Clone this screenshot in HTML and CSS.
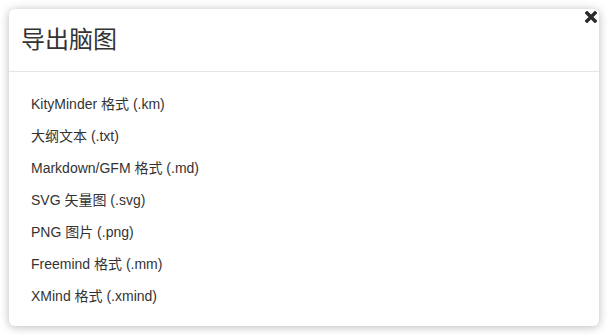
FILE: index.html
```html
<!DOCTYPE html>
<html lang="zh">
<head>
<meta charset="utf-8">
<title>导出脑图</title>
<link rel="stylesheet" href="styles.css">
</head>
<body>
<div class="modal">
  <div class="close" role="button" aria-label="关闭">
    <svg class="close-icon" width="12" height="12" viewBox="0 0 12 12"><path d="M2 2 L10 10 M10 2 L2 10" stroke="#2b2b2b" stroke-width="3.4" stroke-linecap="square"/></svg>
  </div>
  <div class="modal-header">
    <h4 class="modal-title">导出脑图</h4>
  </div>
  <ul class="modal-body">
    <li>KityMinder 格式 (.km)</li>
    <li>大纲文本 (.txt)</li>
    <li>Markdown/GFM 格式 (.md)</li>
    <li>SVG 矢量图 (.svg)</li>
    <li>PNG 图片 (.png)</li>
    <li>Freemind 格式 (.mm)</li>
    <li>XMind 格式 (.xmind)</li>
  </ul>
</div>
</body>
</html>
```
FILE: styles.css
```css
html, body {
  margin: 0;
  padding: 0;
  background: #ffffff;
}
body {
  padding: 9px;
  font-family: "Liberation Sans", "Noto Sans CJK SC", sans-serif;
  color: #333333;
}
.modal {
  position: relative;
  width: 590px;
  height: 317px;
  box-sizing: border-box;
  background: #ffffff;
  border-radius: 6px;
  box-shadow: 0 1px 10px rgba(0, 0, 0, 0.28);
}
.close {
  position: absolute;
  top: 2px;
  right: 2px;
  width: 12px;
  height: 12px;
}
.close-icon {
  display: block;
}
.modal-header {
  height: 63px;
  box-sizing: border-box;
  border-bottom: 1px solid #e5e5e5;
  padding: 0 12px 1px;
  display: flex;
  align-items: center;
}
.modal-title {
  margin: 0;
  font-size: 24px;
  font-weight: normal;
  line-height: 1;
  color: #333333;
}
.modal-body {
  list-style: none;
  margin: 0;
  padding: 16px 22px 14px;
}
.modal-body li {
  height: 32px;
  line-height: 32px;
  font-size: 14px;
  color: #333333;
}
```
